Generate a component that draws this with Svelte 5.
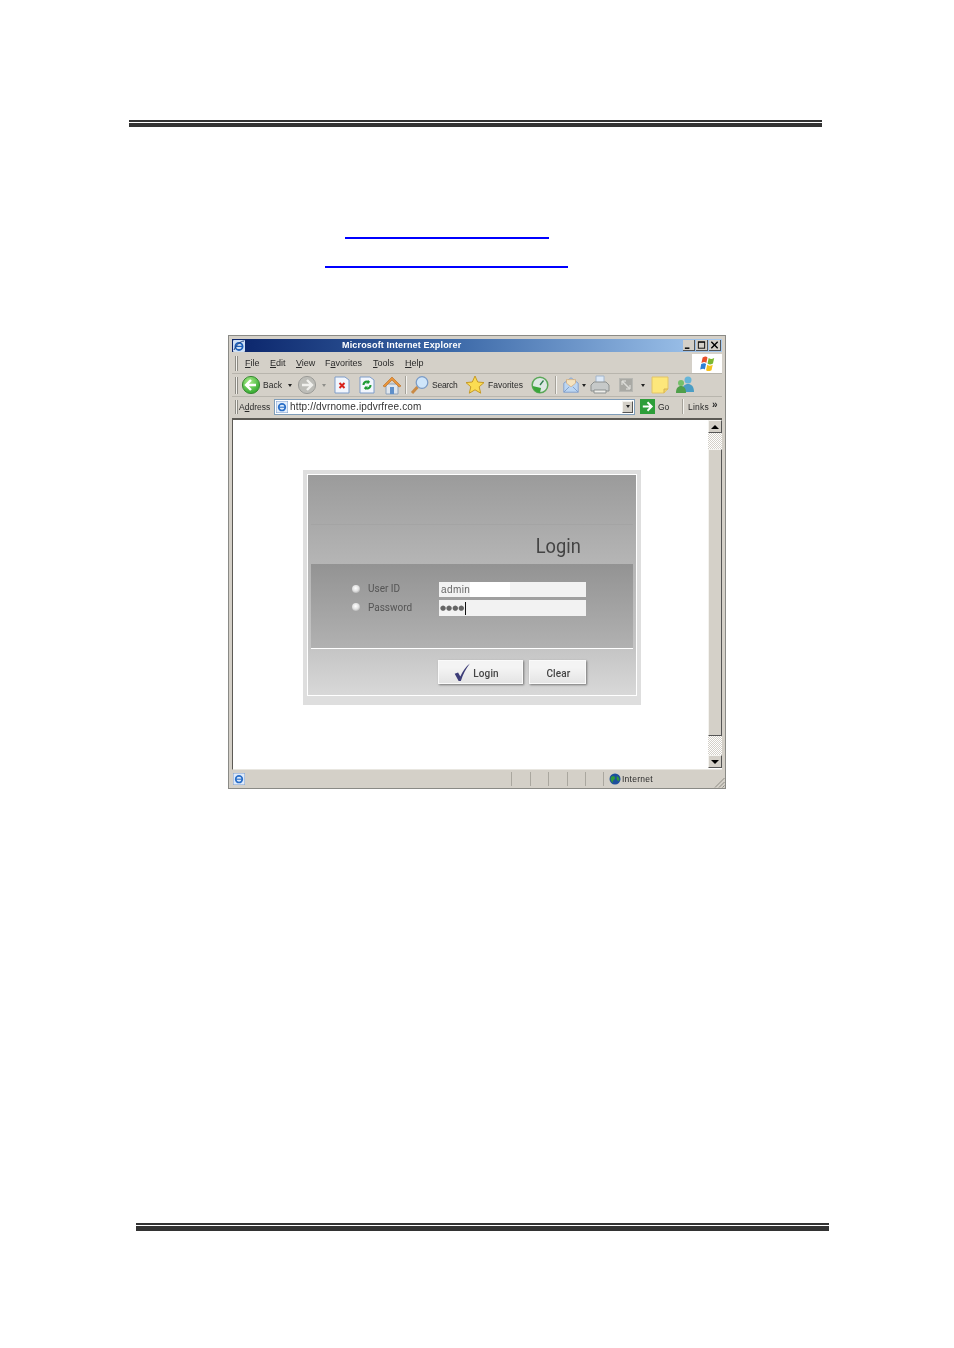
<script>
  const menus = [
    { pre: '', u: 'F', post: 'ile', w: 25 },
    { pre: '', u: 'E', post: 'dit', w: 26 },
    { pre: '', u: 'V', post: 'iew', w: 29 },
    { pre: 'F', u: 'a', post: 'vorites', w: 48 },
    { pre: '', u: 'T', post: 'ools', w: 32 },
    { pre: '', u: 'H', post: 'elp', w: 24 }
  ];
  const panes = [19, 18, 19, 18, 18];
</script>

<svelte:head><title>Login</title></svelte:head>

<div class="page">
  <div class="rule rule-top"><i></i><b></b></div>
  <div class="link link-a"></div>
  <div class="link link-b"></div>

  <div class="win">
    <div class="title">
      <svg class="title-ico" viewBox="0 0 12 12"><rect width="12" height="12" rx="1" fill="#cfe0f5"/><circle cx="6" cy="6.400" r="3.600" fill="none" stroke="#1d5fb8" stroke-width="1.800"/><path d="M2.500 6.400h7" stroke="#1d5fb8" stroke-width="1.200"/><path d="M1 10C3 5 8 1 11 1" stroke="#1d3f80" fill="none"/></svg>
      <span class="title-text">Microsoft Internet Explorer</span>
      <div class="caps">
        <span class="cap"><svg viewBox="0 0 12 11"><path d="M2 9h5" stroke="#000" stroke-width="1.600"/></svg></span>
        <span class="cap"><svg viewBox="0 0 12 11"><rect x="2.500" y="2" width="7" height="7" fill="none" stroke="#000"/><path d="M2.500 2.500h7" stroke="#000"/></svg></span>
        <span class="cap capx"><svg viewBox="0 0 12 11"><path d="M2.500 2l7 7M9.500 2l-7 7" stroke="#000" stroke-width="1.500"/></svg></span>
      </div>
    </div>

    <div class="menubar">
      <span class="grip"></span>
      <div class="menus">
        {#each menus as m}
          <span class="menu" style="width:{m.w}px">{m.pre}<u>{m.u}</u>{m.post}</span>
        {/each}
      </div>
      <div class="flag">
        <svg viewBox="0 0 14 14" width="17" height="17">
          <path d="M3 2c2-1 3-1 4 0L6 6.500C5 5.500 4 5.500 2 6.500z" fill="#e8502a"/>
          <path d="M8 2.500c1.500 1 2.500 1 4.500 0L11.500 7c-2 1-3 1-4.500 0z" fill="#7cb82f"/>
          <path d="M1.800 7.500c2-1 3-1 4 0L4.800 12C4 11 3 11 1 12z" fill="#2f7fd6"/>
          <path d="M6.800 8c1.500 1 2.500 1 4.500 0l-1 4.500c-2 1-3 1-4.500 0z" fill="#f4c01e"/>
        </svg>
      </div>
    </div>

    <div class="toolbar">
      <span class="grip tall"></span>
      <svg class="i w20 m3" viewBox="0 0 20 20"><defs><radialGradient id="g1" cx=".4" cy=".3" r=".8"><stop offset="0" stop-color="#a8ec88"/><stop offset="1" stop-color="#22a022"/></radialGradient></defs><circle cx="10" cy="10" r="8.600" fill="url(#g1)" stroke="#3b8a35"/><path d="M15 10H6M10 5l-5 5 5 5" fill="none" stroke="#fff" stroke-width="2.400"/></svg>
      <span class="lbl back">Back</span>
      <span class="tri t1"></span>
      <svg class="i w20 m5" viewBox="0 0 20 20"><circle cx="10" cy="10" r="8.600" fill="#bdbdb8" stroke="#9c9c98"/><path d="M5 10h9M10 5l5 5-5 5" fill="none" stroke="#f1f1ee" stroke-width="2.400"/></svg>
      <span class="tri t2"></span>
      <svg class="i w16 m8" viewBox="0 0 16 18"><path d="M1 1h10l4 3v13H1z" fill="#f2f6fd" stroke="#7f9dc9"/><path d="M5.500 7l5 5M10.500 7l-5 5" stroke="#d8221c" stroke-width="2"/></svg>
      <svg class="i w16 m9" viewBox="0 0 16 18"><path d="M1 1h10l4 3v13H1z" fill="#f2f6fd" stroke="#7f9dc9"/><path d="M4.500 9a3.500 3.500 0 0 1 6-2.500M11.500 9a3.500 3.500 0 0 1-6 2.500" fill="none" stroke="#1c9a34" stroke-width="2"/><path d="M10 4v3.500H7M6 14v-3.500h3" fill="#1c9a34"/></svg>
      <svg class="i w20 m7" viewBox="0 0 20 20"><path d="M4 9v10h12V9z" fill="#dfe6ee" stroke="#8ea2bb"/><path d="M1 11l9-9 9 9-2 1-7-7-7 7z" fill="#e8943a" stroke="#b96a1e" stroke-width=".6"/><rect x="8" y="12" width="4" height="7" fill="#5f8fc9"/></svg>
      <span class="sep m3b"></span>
      <svg class="i w20 m3b" viewBox="0 0 20 20"><path d="M7.500 12L2 18" stroke="#c98a45" stroke-width="3"/><circle cx="12" cy="7.500" r="5.800" fill="#cfe6fb" stroke="#7b9cc7" stroke-width="1.300"/></svg>
      <span class="lbl search">Search</span>
      <svg class="i w20 m7" viewBox="0 0 20 20"><path d="M10 1l2.700 6 6.300.6-4.800 4.200 1.500 6.400-5.700-3.400-5.700 3.400 1.500-6.400L1 7.600 7.300 7z" fill="#fbdc52" stroke="#c79a26"/></svg>
      <span class="lbl fav">Favorites</span>
      <svg class="i w20 m8" viewBox="0 0 20 20"><circle cx="10" cy="10" r="7.800" fill="#dde8e4" stroke="#5aa758" stroke-width="1.500"/><path d="M2.500 11a8 8 0 0 0 7.500 7l1-5z" fill="#3aa53a"/><path d="M10 10l3.500-4.500" stroke="#2e7a4c" stroke-width="1.300"/></svg>
      <span class="sep m5"></span>
      <svg class="i w18 m5" viewBox="0 0 18 20"><path d="M1 8l8-6 8 6v10H1z" fill="#bcd6f2" stroke="#7e9cc9"/><path d="M4 8V4h10v4l-5 4z" fill="#f4e3c0" stroke="#d19b5c" stroke-width=".6"/><path d="M1 18l6-6M17 18l-6-6" stroke="#7e9cc9"/></svg>
      <span class="tri t3"></span>
      <svg class="i w20 m4" viewBox="0 0 20 20"><path d="M6 1h8v7H6z" fill="#dde9f7" stroke="#a4b6cb"/><path d="M1 10l3-3h12l3 3v6H1z" fill="#c6c9c9" stroke="#8d9190"/><path d="M4 15h12v3H4z" fill="#eeeeea" stroke="#8d9190"/></svg>
      <svg class="i w14 m9" viewBox="0 0 14 14"><rect x=".5" y=".5" width="13" height="13" fill="#a9a9a4" stroke="#b8b8b3"/><path d="M3.500 3.500l7 7" stroke="#dcdcd8" stroke-width="1.500"/><path d="M3 7V3h4M11 7v4H7" fill="none" stroke="#e7e7e3"/></svg>
      <span class="tri t4"></span>
      <svg class="i w18 m6" viewBox="0 0 18 18"><path d="M1 1h16v12l-4 4H1z" fill="#fde77b" stroke="#e2c468"/><path d="M13 17v-4h4" fill="#f0d269" stroke="#d5b253"/></svg>
      <svg class="i w20 m6" viewBox="0 0 20 20"><circle cx="13" cy="5" r="3.500" fill="#67b5d8"/><path d="M7 17c0-6 3-8 6-8s6 2 6 8z" fill="#4a9dc4"/><circle cx="6" cy="8" r="3" fill="#74c06a"/><path d="M1 18c0-5 2-7 5-7s5 2 5 7z" fill="#4f9f4a"/></svg>
    </div>

    <div class="addr">
      <span class="grip mid"></span>
      <span class="addr-lbl">A<u>d</u>dress</span>
      <div class="addr-box">
        <svg class="ie" viewBox="0 0 12 12"><rect width="12" height="12" fill="#e4eefb" stroke="#7c9ccb"/><circle cx="6" cy="6.200" r="3.300" fill="none" stroke="#2a6fc8" stroke-width="1.700"/><path d="M3 6.200h6" stroke="#2a6fc8" stroke-width="1.100"/></svg>
        <span class="url">http://dvrnome.ipdvrfree.com</span>
        <span class="drop"><span class="tri"></span></span>
      </div>
      <svg class="go" viewBox="0 0 16 16"><rect width="16" height="16" fill="#2d9e3a"/><path d="M3 8h9M8 3.500L12.500 8 8 12.500" fill="none" stroke="#fff" stroke-width="2"/></svg>
      <span class="go-lbl">Go</span>
      <span class="sep addr-sep"></span>
      <span class="links">Links</span>
      <span class="more">»</span>
    </div>

    <div class="content">
      <div class="canvas">
        <div class="panel">
          <div class="inner">
            <div class="head">
              <span class="hair"></span>
              <span class="head-title">Login</span>
            </div>
            <div class="band">
              <div class="row r1">
                <span class="dot"></span>
                <span class="flabel">User ID</span>
                <span class="field">
                  <span class="filled">admin</span>
                </span>
              </div>
              <div class="row r2">
                <span class="dot"></span>
                <span class="flabel">Password</span>
                <span class="field"><span class="pw">●●●●</span><span class="caret"></span></span>
              </div>
            </div>
            <div class="foot">
              <span class="btn b1">
                <svg viewBox="0 0 16 16" width="18" height="18"><path d="M1.500 9.500l3-1 2 3.500C8.500 7.500 11.500 3 15 .5 11.500 5 9 10 7 16H5z" fill="#3d3d78"/></svg>
                Login
              </span>
              <span class="btn b2">Clear</span>
            </div>
          </div>
        </div>
      </div>
      <div class="sbar">
        <span class="sbtn"><span class="up"></span></span>
        <span class="track t-a"></span>
        <span class="thumb"></span>
        <span class="track t-b"></span>
        <span class="sbtn"><span class="down"></span></span>
      </div>
    </div>

    <div class="status">
      <svg class="ie st-ie" viewBox="0 0 12 12"><rect width="12" height="12" fill="#dfeafa" stroke="#7c9ccb"/><circle cx="6" cy="6.200" r="3.300" fill="none" stroke="#2a6fc8" stroke-width="1.700"/><path d="M3 6.200h6" stroke="#2a6fc8" stroke-width="1.100"/></svg>
      <span class="st-fill"></span>
      {#each panes as w}
        <span class="pane" style="width:{w}px"></span>
      {/each}
      <span class="zone">
        <svg viewBox="0 0 12 12" width="12" height="12"><circle cx="6" cy="6" r="5.500" fill="#1d4f9c"/><path d="M2 4c2-2 4-1 4 1S3 7 4 10C2 9 1 6 2 4zM8 3c2 1 3 3 2 5-2 0-3-3-2-5z" fill="#2f9a3c"/></svg>
        Internet
      </span>
      <svg class="resize" viewBox="0 0 11 11"><path d="M10.500 1L1 10.500M10.500 5L5 10.500M10.500 8.500L8.500 10.500" stroke="#8c8a82" fill="none"/></svg>
    </div>
  </div>

  <div class="rule rule-bot"><i></i><b></b></div>
</div>

<style>
  :global(body) { margin: 0; background: #fff; }
  .page { width: 954px; height: 1348px; overflow: hidden; display: flex; flex-direction: column; font-family: "Liberation Sans", Arial, sans-serif; }

  .rule { display: flex; flex-direction: column; width: 693px; }
  .rule i { height: 2px; background: #333; }
  .rule b { height: 4px; margin-top: 1px; background: #333; }
  .rule-top { margin: 120px 0 0 129px; }
  .rule-bot { margin: 434px 0 0 136px; }
  .rule-bot b { height: 5px; }

  .link { height: 2px; background: #0000ff; }
  .link-a { width: 204px; margin: 110px 0 0 345px; }
  .link-b { width: 243px; margin: 27px 0 0 325px; }

  .win { box-sizing: border-box; width: 498px; height: 454px; margin: 67px 0 0 228px; background: #d4d0c8; border: 1px solid #8a8a86; padding: 3px 3px 0; display: flex; flex-direction: column; color: #2a2a2a; font-size: 9px; filter: blur(.3px); }

  .title { height: 13px; flex: none; display: flex; align-items: center; position: relative; padding-left: 1px; background: linear-gradient(90deg, #0a246a 0%, #3c69a8 45%, #a6caf0 100%); }
  .title-ico { width: 12px; height: 12px; }
  .title-text { position: absolute; left: 110px; top: 0; line-height: 13px; color: #fff; font-weight: bold; font-size: 9px; letter-spacing: .16px; white-space: nowrap; }
  .caps { margin-left: auto; display: flex; gap: 1px; padding-right: 1px; }
  .cap { width: 12px; height: 11px; background: #d4d0c8; border: solid; border-width: 0 1px 1px 0; border-color: #555; display: block; box-sizing: border-box; }
  .cap svg { display: block; width: 100%; height: 100%; }

  .menubar { height: 19px; margin-top: 2px; flex: none; display: flex; align-items: center; border-bottom: 1px solid #b8b5ad; padding-left: 3px; }
  .grip { width: 1px; height: 15px; border: solid #8d8b84; border-width: 0 1px; background: #f4f3ef; flex: none; }
  .grip.tall { height: 17px; margin-left: 0; }
  .grip.mid { height: 14px; }
  .menus { display: flex; margin-left: 7px; padding-bottom: 2px; }
  .menu { display: block; }
  .flag { margin-left: auto; width: 30px; height: 19px; background: #fff; display: flex; align-items: center; justify-content: center; }

  .toolbar { height: 22px; flex: none; display: flex; align-items: center; padding-left: 3px; border-bottom: 1px solid #b8b5ad; }
  .i { flex: none; display: block; }
  .w20 { width: 20px; height: 20px; }
  .w18 { width: 18px; height: 18px; }
  .w16 { width: 16px; height: 18px; }
  .w14 { width: 14px; height: 14px; }
  .m3 { margin-left: 3px; }
  .m3b { margin-left: 3px; }
  .m4 { margin-left: 4px; }
  .m5 { margin-left: 5px; }
  .m6 { margin-left: 6px; }
  .m7 { margin-left: 7px; }
  .m8 { margin-left: 8px; }
  .m9 { margin-left: 9px; }
  .lbl { flex: none; font-size: 8.500px; }
  .back { width: 22px; margin-left: 2px; }
  .search { width: 26px; margin-left: 2px; letter-spacing: -.25px; }
  .fav { width: 34px; margin-left: 3px; }
  .tri { display: block; flex: none; width: 0; height: 0; border: 2.500px solid transparent; border-top: 3px solid #222; border-bottom: 0; }
  .t1 { margin-left: 3px; }
  .t2 { margin-left: 5px; border-top-color: #8e8e8a; }
  .t3 { margin-left: 2px; }
  .t4 { margin-left: 8px; }
  .sep { display: block; flex: none; width: 1px; height: 18px; background: #a5a29a; border-right: 1px solid #f4f3ef; }

  .addr { height: 19px; flex: none; display: flex; align-items: center; padding-left: 3px; }
  .addr-lbl { margin-left: 1px; width: 35px; font-size: 8.500px; flex: none; }
  .addr-box { box-sizing: border-box; width: 361px; height: 16px; background: #fff; border: 1px solid #7f9db9; display: flex; align-items: center; flex: none; padding-right: 1px; }
  .ie { width: 12px; height: 12px; flex: none; margin-left: 1px; }
  .url { margin-left: 2px; font-size: 10px; color: #333; letter-spacing: .15px; white-space: nowrap; }
  .drop { margin-left: auto; width: 11px; height: 12px; background: #d4d0c8; border: 1px solid; border-color: #f4f3ef #555 #555 #f4f3ef; display: flex; align-items: center; justify-content: center; box-sizing: border-box; }
  .go { width: 15px; height: 15px; margin-left: 5px; flex: none; }
  .go-lbl { margin-left: 3px; width: 24px; font-size: 8.500px; flex: none; }
  .addr-sep { height: 15px; }
  .links { margin-left: 4px; width: 24px; font-size: 8.500px; flex: none; letter-spacing: .2px; }
  .more { font-size: 10px; font-weight: bold; line-height: 10px; margin-top: -4px; }

  .content { box-sizing: border-box; margin-top: 2px; height: 352px; flex: none; display: flex; border-top: 2px solid #5c5a55; border-left: 1px solid #5c5a55; background: #fff; border-bottom: 1px solid #e8e6e0; }
  .canvas { flex: 1; padding: 50px 0 0 70px; }
  .sbar { width: 14px; flex: none; display: flex; flex-direction: column; }
  .sbtn { box-sizing: border-box; height: 13px; flex: none; background: #d4d0c8; border: 1px solid; border-color: #f4f3ef #555 #555 #f4f3ef; display: flex; align-items: center; justify-content: center; }
  .up { border: 4px solid transparent; border-top: 0; border-bottom: 4px solid #000; }
  .down { border: 4px solid transparent; border-bottom: 0; border-top: 4px solid #000; }
  .track { flex: none; background: repeating-conic-gradient(#d4d0c8 0 25%, #fff 0 50%) 0 0 / 2px 2px; }
  .t-a { height: 16px; }
  .t-b { height: 19px; }
  .thumb { box-sizing: border-box; height: 287px; flex: none; background: #d4d0c8; border: 1px solid; border-color: #f4f3ef #555 #555 #f4f3ef; }

  .panel { box-sizing: border-box; width: 338px; height: 235px; background: #dedede; padding: 4px 4px 9px; }
  .inner { box-sizing: border-box; height: 100%; border: 1px solid #fff; background: linear-gradient(180deg, #9b9b9b 0%, #b5b5b5 40%, #c4c4c4 78%, #d8d8d8 100%); display: flex; flex-direction: column; }
  .head { height: 89px; flex: none; position: relative; display: flex; justify-content: flex-end; }
  .hair { position: absolute; left: 3px; right: 3px; top: 49px; height: 1px; background: #a4a4a4; }
  .head-title { font-family: Roboto, sans-serif; font-size: 21px; line-height: 24px; margin: 59px 55px 0 0; color: #444; transform: scaleX(.87); transform-origin: right center; }
  .band { box-sizing: border-box; height: 85px; flex: none; margin: 0 3px; background: linear-gradient(180deg, #939393 0%, #b1b1b1 100%); border-bottom: 1px solid #fff; padding: 18px 0 0 41px; display: flex; flex-direction: column; gap: 3px; }
  .row { display: flex; align-items: center; }
  .r1 { height: 15px; }
  .r2 { height: 16px; }
  .dot { width: 8px; height: 8px; margin-bottom: 1px; border-radius: 50%; background: radial-gradient(circle at 45% 40%, #fff 0%, #e2e2e2 45%, #8f8f8f 100%); flex: none; }
  .r2 .dot { margin-bottom: 2px; }
  .flabel { margin-left: 8px; width: 71px; flex: none; font-family: Roboto, sans-serif; font-size: 10px; letter-spacing: 0; color: #555; line-height: 13px; padding-bottom: 2px; }
  .field { box-sizing: border-box; width: 147px; height: 100%; flex: none; background: #f2f2f2; display: flex; align-items: center; padding-left: 1px; }
  .filled { display: block; width: 69px; height: 100%; line-height: 15px; padding-left: 1px; background: linear-gradient(90deg, #f2f2f2 0 30px, #fff 30px); font-size: 10px; letter-spacing: .4px; color: #666; }
  .pw { font-family: "DejaVu Sans", sans-serif; font-size: 7px; letter-spacing: 0; color: #666; }
  .caret { width: 1px; height: 13px; background: #111; margin-left: 1px; }
  .foot { flex: 1; display: flex; gap: 6px; padding: 11px 0 0 130px; }
  .btn { box-sizing: border-box; height: 24px; padding-top: 2px; display: flex; align-items: center; justify-content: center; gap: 2px; background: linear-gradient(180deg, #f4f4f4 0 30%, #e4e4e4 100%); border: 1px solid #fafafa; box-shadow: 1px 1px 2px #777; font-family: Roboto, sans-serif; font-size: 10px; font-weight: 500; letter-spacing: .15px; color: #444; }
  .b1 { width: 85px; padding-right: 9px; }
  .b1 svg { margin-top: -3px; }
  .b2 { width: 57px; padding-left: 2px; }

  .status { height: 17px; flex: none; display: flex; align-items: center; position: relative; padding-bottom: 1px; }
  .st-ie { margin-left: 1px; }
  .st-fill { flex: none; width: 266px; height: 14px; margin-left: 0; border-right: 1px solid #aaa79f; }
  .pane { display: block; flex: none; box-sizing: border-box; height: 14px; border-right: 1px solid #aaa79f; }
  .zone { display: flex; align-items: center; gap: 1px; margin-left: 5px; font-size: 8.500px; letter-spacing: .25px; }
  .resize { position: absolute; right: -3px; bottom: 0; width: 11px; height: 11px; }
</style>
